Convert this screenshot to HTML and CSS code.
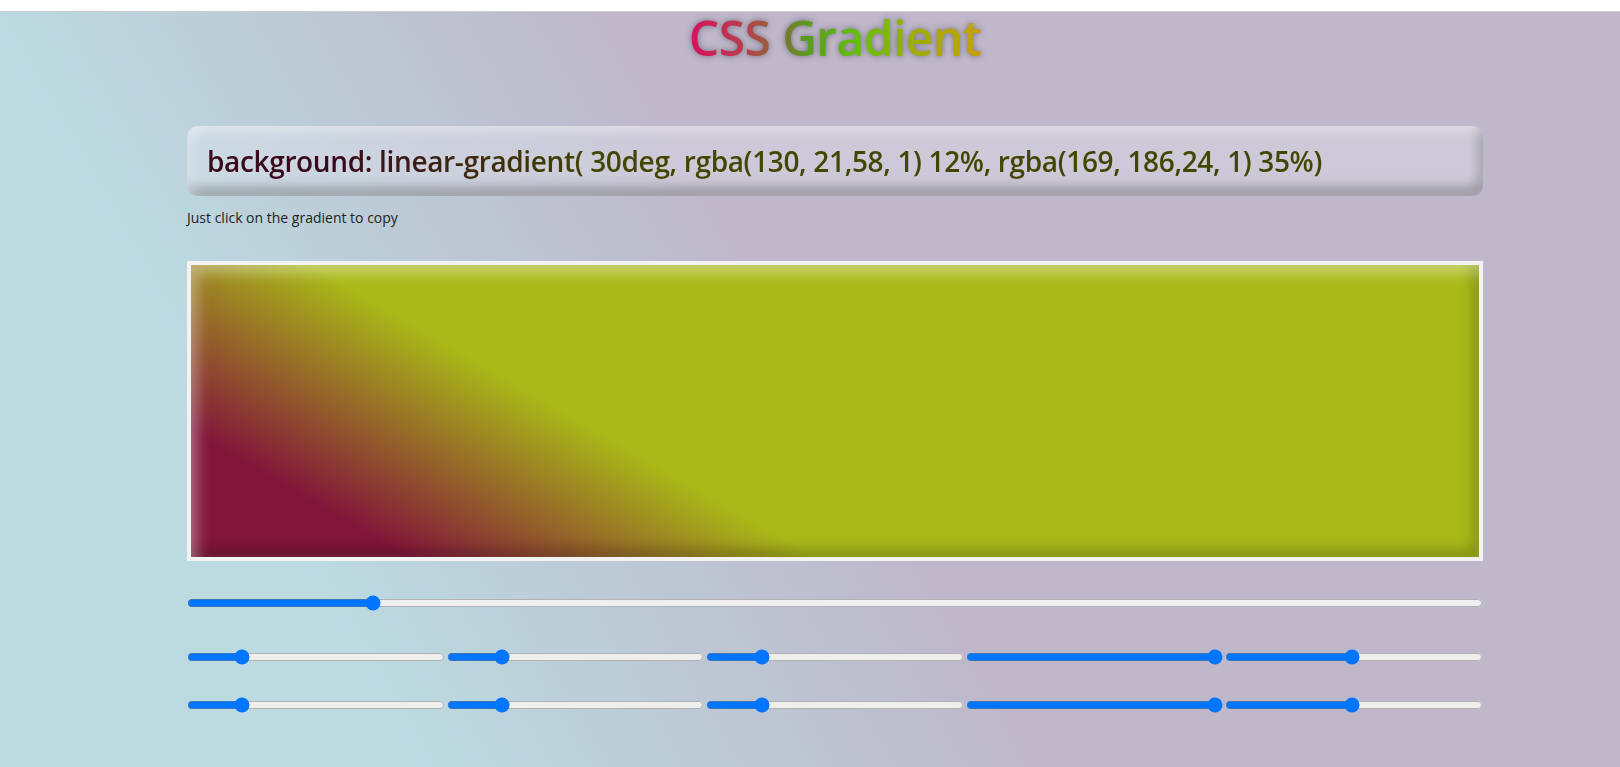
FILE: index.html
```html
<!DOCTYPE html>
<html lang="en">
<head>
<meta charset="utf-8">
<title>CSS Gradient</title>
<link rel="stylesheet" href="styles.css">
</head>
<body>
<div class="topbar"></div>
<main class="page">
  <h1 class="title">CSS Gradient</h1>
  <section class="wrap">
    <div class="code-box">
      <h2 class="code">background: linear-gradient( 30deg, rgba(130, 21,58, 1) 12%, rgba(169, 186,24, 1) 35%)</h2>
    </div>
    <p class="hint">Just click on the gradient to copy</p>
    <div class="frame"><div class="preview"></div></div>
    <div class="controls">
      <input class="slider angle" type="range" min="0" max="360" value="50">
      <div class="slider-row">
        <input class="slider" type="range" min="0" max="255" value="50">
        <input class="slider" type="range" min="0" max="255" value="50">
        <input class="slider" type="range" min="0" max="255" value="50">
        <input class="slider" type="range" min="0" max="1" step="0.01" value="1">
        <input class="slider" type="range" min="0" max="100" value="49">
      </div>
      <div class="slider-row row-last">
        <input class="slider" type="range" min="0" max="255" value="50">
        <input class="slider" type="range" min="0" max="255" value="50">
        <input class="slider" type="range" min="0" max="255" value="50">
        <input class="slider" type="range" min="0" max="1" step="0.01" value="1">
        <input class="slider" type="range" min="0" max="100" value="49">
      </div>
    </div>
  </section>
</main>
</body>
</html>
```

FILE: styles.css
```css
html {
  height: 100%;
  background: linear-gradient(60deg, #bcdbe1 20%, #beb8ca 50%);
}

body {
  margin: 0;
  min-height: 100%;
  font-family: "Open Sans", "Noto Sans", sans-serif;
  color: #222;
}

.topbar {
  height: 11px;
  background: #ffffff;
  border-bottom: 1px solid #cfd0d6;
}

.page {
  padding-left: 50px;
}

.title {
  margin: 2px auto 0;
  font-size: 48px;
  line-height: 48px;
  font-weight: 600;
  letter-spacing: -0.6px;
  text-align: center;
  background: linear-gradient(90deg, #d8105e 0%, #b8404c 20%, #8a6a30 30%, #5a9a20 40%, #62c200 58%, #98b000 75%, #c8a000 100%);
  -webkit-background-clip: text;
  background-clip: text;
  color: transparent;
  width: max-content;
  filter: drop-shadow(0 0 3px rgba(40, 30, 50, 0.5));
}

.wrap {
  width: 1296px;
  margin: 0 auto;
}

.code-box {
  margin-top: 64px;
  height: 70px;
  box-sizing: border-box;
  padding: 0 20px;
  display: flex;
  align-items: center;
  border-radius: 10px;
  background: rgba(228, 230, 240, 0.38);
  box-shadow: inset 4px 4px 12px rgba(255, 255, 255, 0.45), inset -4px -9px 12px rgba(0, 0, 0, 0.25);
}

.code {
  margin: 0;
  font-size: 28px;
  line-height: 40px;
  font-weight: 600;
  letter-spacing: -0.35px;
  background: linear-gradient(90deg, #3a0a1c 12%, #424600 35%);
  -webkit-background-clip: text;
  background-clip: text;
  color: transparent;
}

.hint {
  margin: 13px 0 0;
  font-size: 14px;
  line-height: 18px;
  color: #222;
}

.frame {
  margin-top: 34px;
  border: 4px solid #f3f3f3;
  height: 292px;
}

.preview {
  height: 100%;
  background: linear-gradient(30deg, rgba(130, 21, 58, 1) 12%, rgba(169, 186, 24, 1) 35%);
  box-shadow: inset 6px 8px 14px rgba(255, 255, 255, 0.38), inset -6px -8px 14px rgba(0, 0, 0, 0.22);
}

.controls {
  margin-top: 34px;
}

.slider {
  display: block;
  width: 100%;
  height: 16px;
  margin: 0;
}

.slider-row {
  display: grid;
  grid-template-columns: repeat(5, 1fr);
  column-gap: 2px;
  margin-top: 38px;
}

.row-last {
  margin-top: 32px;
}
```
